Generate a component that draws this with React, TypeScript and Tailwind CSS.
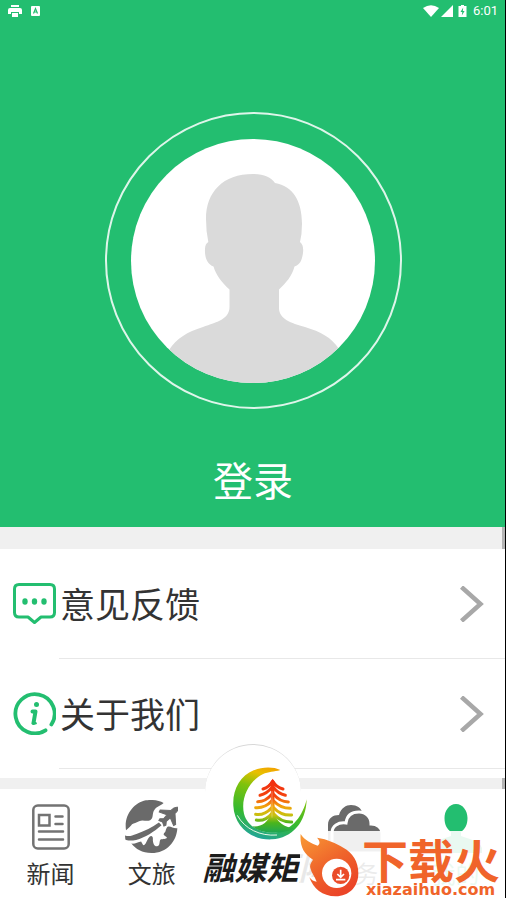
import type { ReactNode } from 'react';

const GREEN = '#23be70';

function StatusBar() {
  return (
    <div className="flex h-[22px] items-center justify-between px-2 text-white">
      <div className="flex items-center gap-2">
        <svg className="h-3.5 w-3.5" viewBox="0 0 14 14" fill="currentColor">
          <path d="M3 1h8v2H3zM2 4h10a2 2 0 0 1 2 2v4h-3V8H3v2H0V6a2 2 0 0 1 2-2zM4 9h6v4H4z" />
        </svg>
        <svg className="h-3.5 w-3.5" viewBox="0 0 14 14">
          <rect x="1" y="2" width="9" height="10" rx="1" fill="#fff" />
          <path d="M3.5 9.5L5.5 4.5L7.5 9.5M4.2 8h2.6" stroke={GREEN} strokeWidth="1.2" fill="none" />
        </svg>
      </div>
      <div className="flex items-center gap-1">
        <div className="flex items-center gap-0.5">
          <svg className="h-3 w-4" viewBox="0 0 16 12" fill="currentColor">
            <path d="M0 3Q8-2.5 16 3L8 12Z" />
          </svg>
          <svg className="h-3 w-3" viewBox="0 0 12 12" fill="currentColor">
            <path d="M12 0V12H0Z" />
          </svg>
        </div>
        <svg className="h-3 w-3" viewBox="0 0 12 12">
          <path d="M4 0h3v1h2.5v11h-8V1H4z" fill="#fff" />
          <path d="M6.2 2.5L3.5 7h1.8L4.8 10.5L7.6 6H5.8z" fill={GREEN} />
        </svg>
        <span className="font-[Roboto,sans-serif] text-[13px] leading-5">6:01</span>
      </div>
    </div>
  );
}

function Avatar() {
  return (
    <div className="flex h-[297px] w-[297px] items-center justify-center rounded-full border-2 border-white/85">
      <svg className="h-[244px] w-[244px] rounded-full bg-white" viewBox="0 0 244 244">
        <path
          fill="#dadada"
          d="M122 35C133 35 140 38 144 44C162 47 171 62 171 85Q171 95 169 103Q173 106 172 114C171 121 169 126 163.5 127.5C161 137 155 144 148 150.5V169C148 180 160 184 174 188C190 193 200 198 208 210V244H38V211C46 199 56 193 72 188C86 183 98.5 180 98.5 168V150.5C91 144 85 136 82.5 127.5C76 125 73.5 118 74 110Q74 105 77.3 103Q75 92 75 80C75 53 92 35 122 35Z"
        />
      </svg>
    </div>
  );
}

function FeedbackIcon() {
  return (
    <svg className="h-[43px] w-[43px]" viewBox="0 0 43 43" fill="none" stroke={GREEN} strokeWidth="3" strokeLinejoin="round">
      <path d="M6 2.5H37Q41.5 2.5 41.5 7V30.5Q41.5 35 37 35H28L21.5 40.5L15 35H6Q1.5 35 1.5 30.5V7Q1.5 2.5 6 2.5Z" />
      <g fill={GREEN} stroke="none">
        <ellipse cx="12" cy="19.5" rx="2.7" ry="3.2" />
        <ellipse cx="21.5" cy="19.5" rx="2.7" ry="3.2" />
        <ellipse cx="31" cy="19.5" rx="2.7" ry="3.2" />
      </g>
    </svg>
  );
}

function AboutIcon() {
  return (
    <svg className="h-[43px] w-[43px]" viewBox="0 0 43 43" fill="none" stroke={GREEN} strokeWidth="3.8" strokeLinecap="round">
      <path d="M38.4 32.5A19.6 19.6 0 1 0 32.5 38.3" />
      <circle cx="23.5" cy="12.5" r="2.5" fill={GREEN} stroke="none" />
      <path d="M19.5 19.5H22.5L20.5 31" strokeWidth="4" strokeLinejoin="round" />
      <path d="M20 31.3h2.5" strokeWidth="2.5" />
    </svg>
  );
}

function NewsIcon() {
  return (
    <svg className="h-[46px] w-[38px]" viewBox="0 0 38 46" fill="none" stroke="#737373" strokeWidth="2.5" strokeLinecap="round">
      <rect x="1.3" y="1.5" width="35.4" height="43" rx="4.5" />
      <rect x="7" y="11" width="10.5" height="10.5" />
      <path d="M23.5 12.5h7M23.5 20h7M7 27.5h24M7 35.5h24" />
    </svg>
  );
}

function TravelIcon() {
  return (
    <svg className="h-[53px] w-[53px]" viewBox="0 0 158 158" fill="#6a6a6a">
      <path d="M3 90C-4 45 27 8 62 1C82-2 102 1 115 9C107 17 93 20 88 29C80 39 86 55 75 60C63 66 55 57 42 63C32 68 28 69 21 72C17 78 10 83 3 90Z" />
      <path d="M0 106C14 110 20 106 34 101C60 92 80 82 101 67L109 75C87 94 60 112 33 119C18 122 5 121 1 118Z" />
      <path d="M19 130C28 132 39 126 48 124C52 130 53 138 59 133C65 126 68 111 76 108C82 105 84 113 83 120C84 130 87 139 96 138C106 136 101 124 106 118C112 116 123 118 125 112C119 106 112 106 117 98C123 95 120 85 128 79C137 77 145 86 156 84C154 123 125 158 79 158C51 158 32 147 19 130Z" />
      <path
        d="M158 22C151 20 143 25 137 31L105 30L102 36L125 44L115 56L104 56L101 61L112 66L116 78L122 75L123 64L135 53L145 76L151 73L149 40C156 34 160 28 158 22Z"
        stroke="#6a6a6a"
        strokeWidth="3"
      />
    </svg>
  );
}

function ServiceIcon() {
  return (
    <svg className="h-[53px] w-[53px]" viewBox="0 0 53 53">
      <path d="M0 53V25C0 18 5 15 11 15C13 8 18 5 23 5C29 5 33 8 34 12L37 17L18 32Z" fill="#6a6a6a" />
      <path d="M4 53V33C4 26 10 22 18 23C19 14 25 12 31 12C38 12 43 17 43 24C49 24 54 28 54 33V53Z" fill="#6a6a6a" stroke="#fff" strokeWidth="3" />
    </svg>
  );
}

function MineIcon() {
  return (
    <svg className="h-[53px] w-[53px]" viewBox="0 0 53 53" fill={GREEN}>
      <path d="M27 4C34 4 38.5 11 38.5 18C38.5 25 36 29 32 32V36C39 39 50 40 53 48V53H1V48C4 40 15 39 22 36V32C18 29 15.5 25 15.5 18C15.5 11 20 4 27 4Z" />
    </svg>
  );
}

function PineLogo() {
  return (
    <svg className="h-[74px] w-[74px]" viewBox="130 95 222 222">
      <defs>
        <linearGradient id="ring" gradientUnits="userSpaceOnUse" x1="275" y1="100" x2="215" y2="315">
          <stop offset="0" stopColor="#f59b00" />
          <stop offset="0.15" stopColor="#e8c000" />
          <stop offset="0.35" stopColor="#7fc20c" />
          <stop offset="0.7" stopColor="#34b92f" />
          <stop offset="1" stopColor="#22a59a" />
        </linearGradient>
        <linearGradient id="pine" gradientUnits="userSpaceOnUse" x1="0" y1="135" x2="0" y2="298">
          <stop offset="0" stopColor="#f02b12" />
          <stop offset="0.32" stopColor="#f4450f" />
          <stop offset="0.5" stopColor="#f2a30b" />
          <stop offset="0.66" stopColor="#c9c010" />
          <stop offset="0.8" stopColor="#4bb51c" />
          <stop offset="1" stopColor="#18a55a" />
        </linearGradient>
      </defs>
      <path
        fill="url(#ring)"
        d="M272 107C252 97 218 97 192 108C153 124 128 165 131 214C134 276 184 318 247 315C307 312 349 265 351 195C339 246 308 284 265 293C222 301 174 280 163 238C152 189 180 139 219 120C237 111 253 113 272 107Z"
      />
      <path d="M143 243C165 284 212 306 262 302" fill="none" stroke="#e9f8e9" strokeWidth="3" />
      <g fill="none" stroke="url(#pine)" strokeWidth="9" strokeLinecap="round">
        <path d="M248 142Q239 158 220 164M250 142Q259 158 280 164" />
        <path d="M246 160Q232 178 211 183M252 160Q265 178 287 183" />
        <path d="M246 180Q228 202 204 202M252 180Q270 202 296 203" />
        <path d="M246 200Q226 222 198 220M252 200Q272 222 302 222" />
        <path d="M246 220Q224 244 198 240M252 220Q274 244 306 242" />
        <path d="M246 238Q226 262 200 257M252 238Q274 264 306 263" />
      </g>
      <path
        d="M249 133L266 158L254 156L255 238C262 264 284 278 313 282C282 301 213 300 189 276C217 278 236 262 243 238L244 156L232 158Z"
        fill="url(#pine)"
      />
      <path d="M247 170V250" stroke="#fff" strokeOpacity="0.45" strokeWidth="2" />
    </svg>
  );
}

function FlameLogo() {
  return (
    <svg className="h-[64px] w-[60px] shrink-0" viewBox="15 155 180 192">
      <defs>
        <linearGradient id="flame" x1="0" y1="0" x2="0.6" y2="1">
          <stop offset="0" stopColor="#f99b35" />
          <stop offset="0.55" stopColor="#ef652b" />
          <stop offset="1" stopColor="#eb4528" />
        </linearGradient>
      </defs>
      <path
        fill="url(#flame)"
        d="M17 158C29 177 48 186 68 193C76 188 75 178 66 169C98 174 122 185 145 199C173 214 190 240 190 276C190 317 162 345 122 345C82 345 55 322 43 288C49 296 57 301 65 301C59 285 50 276 46 260C43 249 50 242 54 235C24 218 14 190 17 158Z"
      />
      <circle cx="125" cy="276" r="44" fill="#fff" />
      <circle cx="137" cy="282" r="26" fill="#ea4c29" />
      <path d="M137 265V285M127 278L137 288L147 278M123 295H151" stroke="#fff" strokeWidth="5" fill="none" />
    </svg>
  );
}

function Chevron() {
  return (
    <svg className="h-9 w-6" viewBox="0 0 24 36" fill="none" stroke="#a8a8a8" strokeWidth="4.5">
      <path d="M1.5 1L20.5 18L1.5 35" />
    </svg>
  );
}

function MenuRow({ icon, label }: { icon: ReactNode; label: string }) {
  return (
    <button type="button" className="block w-full text-left">
      <span className="flex h-[109px] items-center gap-1 pr-[22px] pl-[13px]">
        {icon}
        <span className="flex-1 pb-0.5 text-[35px] leading-10 text-[#333]">{label}</span>
        <Chevron />
      </span>
      <span className="ml-[59px] block h-px bg-[#e8e8e8]" />
    </button>
  );
}

function Divider({ className }: { className: string }) {
  return (
    <div className={`flex justify-end bg-[#f0f0f0] ${className}`}>
      <div className="w-1 bg-[#b4b4b4]" />
    </div>
  );
}

function Tab({ icon, label, active }: { icon: ReactNode; label: string; active?: boolean }) {
  return (
    <button type="button" className="flex flex-1 flex-col items-center pt-[11px]">
      <span className="flex h-[53px] items-center">{icon}</span>
      <span className={active ? 'mt-1 text-2xl leading-8 text-[#23be70]' : 'mt-1 text-2xl leading-8 text-[#333]'}>
        {label}
      </span>
    </button>
  );
}

export default function App() {
  return (
    <div className="relative flex min-h-screen flex-col overflow-hidden bg-white font-['Noto_Sans_CJK_SC',sans-serif]">
      <header className="bg-[#23be70]">
        <StatusBar />
        <div className="flex flex-col items-center pt-[90px] pb-6">
          <Avatar />
          <button type="button" className="mt-[46px] text-[40px] leading-12 text-white">
            登录
          </button>
        </div>
      </header>

      <Divider className="h-[22px]" />
      <main className="flex-1 pb-[9px]">
        <MenuRow icon={<FeedbackIcon />} label="意见反馈" />
        <MenuRow icon={<AboutIcon />} label="关于我们" />
      </main>
      <Divider className="h-[11px]" />

      <nav className="relative flex h-[109px] bg-white">
        <Tab icon={<NewsIcon />} label="新闻" />
        <Tab icon={<TravelIcon />} label="文旅" />
        <div className="relative flex-1">
          <div className="absolute -top-[45px] left-1/2 h-24 w-24 -translate-x-1/2 rounded-full border-t border-[#d8d8d8] bg-white" />
          <button type="button" className="absolute bottom-0 left-0 flex h-[132px] flex-col">
            <span className="ml-[31px] block">
              <PineLogo />
            </span>
            <span className="mt-2 text-[32px] leading-9 font-bold whitespace-nowrap text-[#1c1c1c] italic">融媒矩阵</span>
          </button>
        </div>
        <Tab icon={<ServiceIcon />} label="服务" />
        <Tab icon={<MineIcon />} label="我的" active />
      </nav>

      <a href="#download" className="absolute right-0 bottom-0 flex h-[67px] w-[206px] items-center gap-0.5 bg-white/90">
        <FlameLogo />
        <span className="flex flex-col gap-1 pt-1.5 text-[#f0642a]">
          <span className="text-[46px] leading-10 font-bold whitespace-nowrap">下载火</span>
          <span className="pl-1 font-['DejaVu_Sans',sans-serif] text-base leading-4 font-bold">xiazaihuo.com</span>
        </span>
      </a>
      <div className="absolute inset-y-0 right-0 w-px bg-black" />
    </div>
  );
}
